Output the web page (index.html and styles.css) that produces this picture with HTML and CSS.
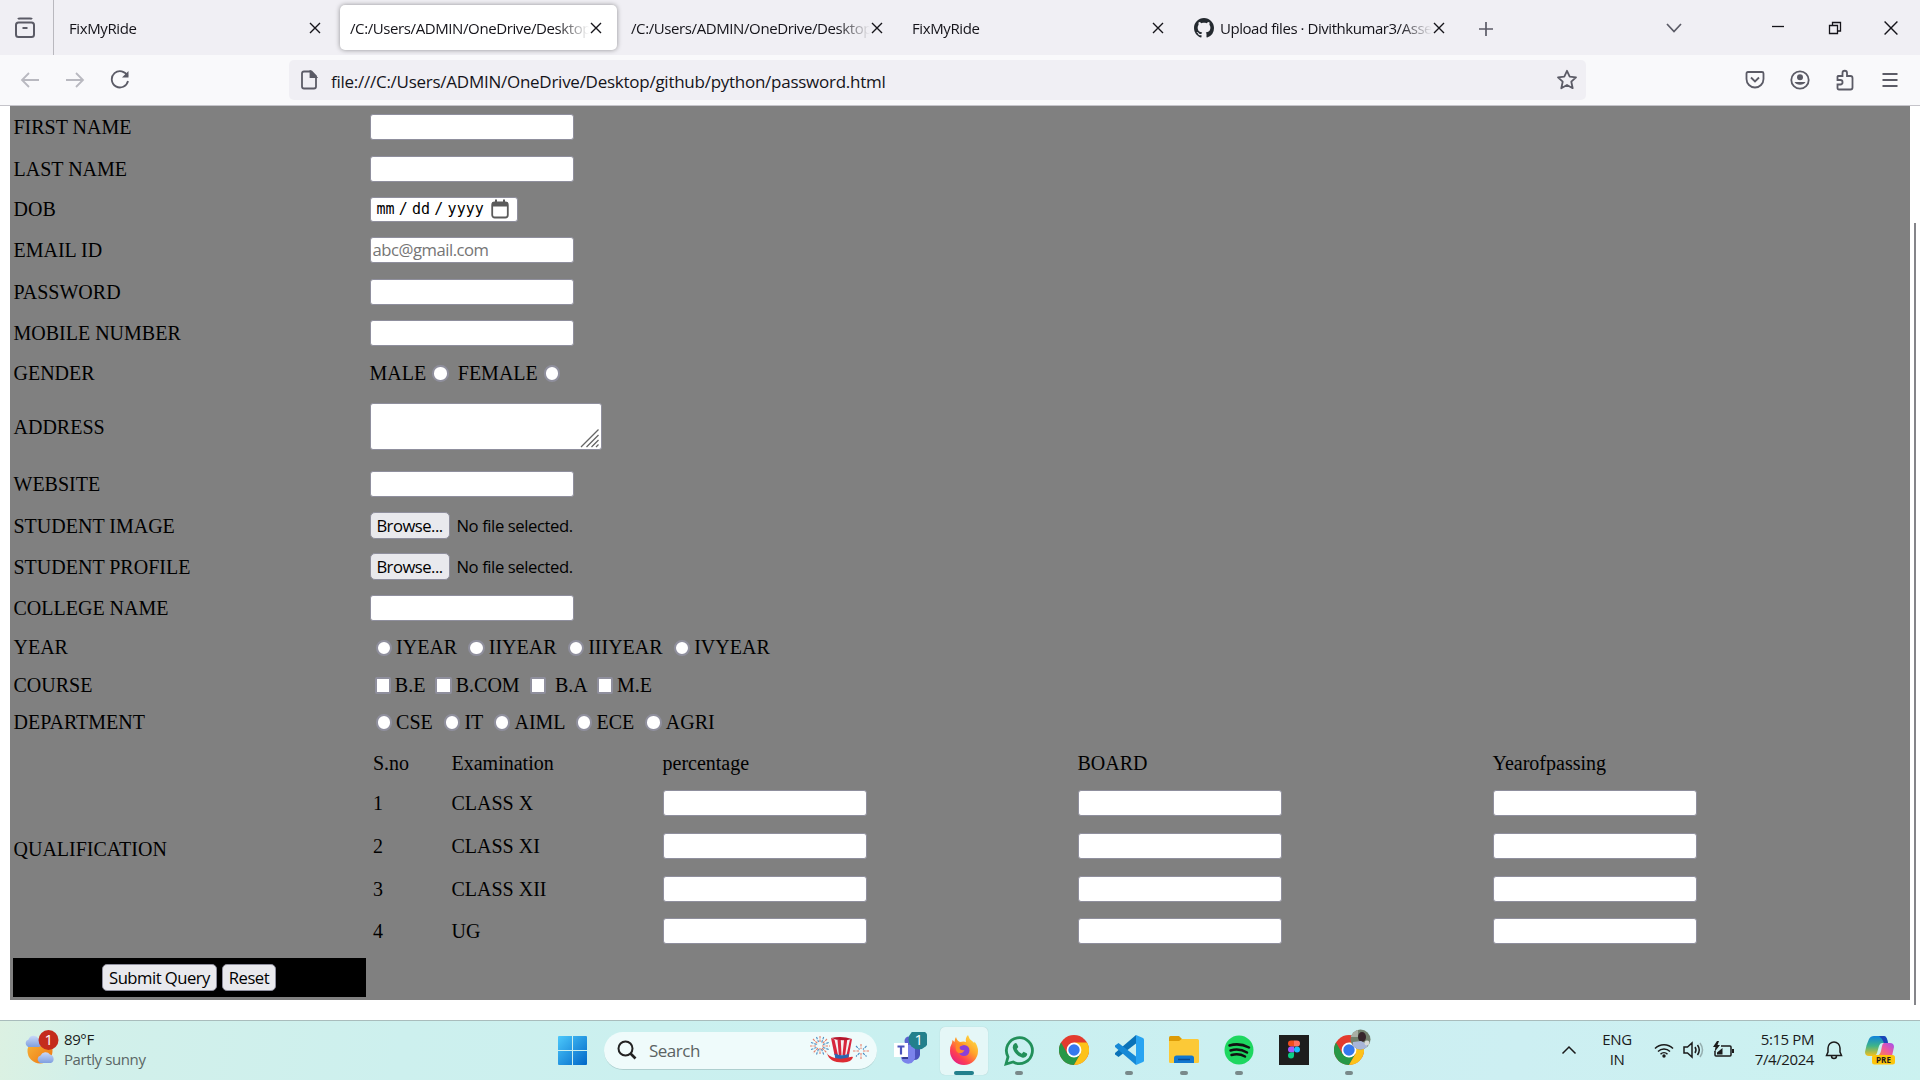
FILE: index.html
```
<!DOCTYPE html>
<html lang="en">
<head>
<meta charset="utf-8">
<title>password.html</title>
<link rel="stylesheet" href="styles.css">
</head>
<body>
<svg class="defs" width="0" height="0" aria-hidden="true">
  <symbol id="x" viewBox="0 0 12 12"><path d="M1 1l10 10M11 1L1 11" fill="none" stroke="#15141a" stroke-width="1.4"/></symbol>
  <symbol id="chrome" viewBox="0 0 30 30">
    <circle cx="15" cy="15" r="15" fill="#e33b2e"/>
    <path d="M2 7.5A15 15 0 0 0 15 30L21.5 18.7 8.5 18.7z" fill="#279847"/>
    <path d="M28 7.5H15L21.5 18.7 15 30A15 15 0 0 0 28 7.5z" fill="#fdc21a"/>
    <circle cx="15" cy="15" r="7.4" fill="#fff"/><circle cx="15" cy="15" r="5.7" fill="#3578ee"/>
  </symbol>
</svg>

<header class="tabstrip">
  <div class="recent">
    <svg width="22" height="22" viewBox="0 0 22 22" fill="none" stroke="#5b5b66" stroke-width="2"><path d="M4 2.2Q4.5 1.5 6 1.5h10q1.5 0 2 .7" /><rect x="2" y="5.5" width="18" height="14.5" rx="2.5"/><path d="M8.5 11h5"/></svg>
  </div>
  <div class="tab"><span class="title">FixMyRide</span><svg class="close"><use href="#x"/></svg></div>
  <div class="tab active"><span class="title">/C:/Users/ADMIN/OneDrive/Desktop</span><svg class="close"><use href="#x"/></svg></div>
  <div class="tab"><span class="title">/C:/Users/ADMIN/OneDrive/Desktop</span><svg class="close"><use href="#x"/></svg></div>
  <div class="tab"><span class="title">FixMyRide</span><svg class="close"><use href="#x"/></svg></div>
  <div class="tab gh">
    <svg class="octo" viewBox="0 0 16 16"><path fill="#24292f" d="M8 0C3.58 0 0 3.58 0 8c0 3.54 2.29 6.53 5.47 7.59.4.07.55-.17.55-.38 0-.19-.01-.82-.01-1.49-2.01.37-2.53-.49-2.69-.94-.09-.23-.48-.94-.82-1.13-.28-.15-.68-.52-.01-.53.63-.01 1.08.58 1.23.82.72 1.21 1.87.87 2.33.66.07-.52.28-.87.51-1.07-1.78-.2-3.64-.89-3.64-3.95 0-.87.31-1.59.82-2.15-.08-.2-.36-1.02.08-2.12 0 0 .67-.21 2.2.82.64-.18 1.32-.27 2-.27s1.36.09 2 .27c1.53-1.04 2.2-.82 2.2-.82.44 1.1.16 1.92.08 2.12.51.56.82 1.27.82 2.15 0 3.07-1.87 3.75-3.65 3.95.29.25.54.73.54 1.48 0 1.07-.01 1.93-.01 2.2 0 .21.15.46.55.38A8.01 8.01 0 0 0 16 8c0-4.42-3.58-8-8-8z"/></svg>
    <span class="title">Upload files · Divithkumar3/Asse</span><svg class="close"><use href="#x"/></svg></div>
  <div class="newtab"><svg width="16" height="16" viewBox="0 0 16 16"><path d="M8 1v14M1 8h14" stroke="#5b5b66" stroke-width="1.7"/></svg></div>
  <div class="winctl">
    <svg width="18" height="12" viewBox="0 0 18 12"><path d="M2 2l7 7.5L16 2" fill="none" stroke="#5b5b66" stroke-width="1.7"/></svg>
    <svg class="min" width="14" height="4"><path d="M1 1.5h12" stroke="#15141a" stroke-width="1.3"/></svg>
    <svg class="restore" width="14" height="14" viewBox="0 0 14 14"><path d="M1.5 4.5h8v8h-8zM4.500 4.500v-3h8v8.500h-3" fill="none" stroke="#15141a" stroke-width="1.3"/></svg>
    <svg class="wclose" width="14" height="14" viewBox="0 0 12 12"><path d="M.5.5l11 11M11.500.5l-11 11" stroke="#15141a" stroke-width="1.2"/></svg>
  </div>
</header>

<nav class="toolbar">
  <div class="navbtns">
    <svg width="20" height="20" viewBox="0 0 20 20" class="dim"><path d="M19 10H2M9 3l-7 7 7 7"/></svg>
    <svg width="20" height="20" viewBox="0 0 20 20" class="dim"><path d="M1 10h17M11 3l7 7-7 7"/></svg>
    <svg width="20" height="20" viewBox="0 0 20 20"><path d="M17.500 6A8.200 8.200 0 1 0 18 11"/><path d="M18.500 1v6.500H12z" fill="#5b5b66" stroke="none"/></svg>
  </div>
  <div class="urlbar">
    <svg width="18" height="20" viewBox="0 0 18 20"><path d="M4 1.500h7.500L16 6v10.500q0 2-2 2H4q-2 0-2-2v-13q0-2 2-2z"/><path d="M10.500 1.500V7H16z" fill="#5b5b66"/></svg>
    <span class="url">file:///C:/Users/ADMIN/OneDrive/Desktop/github/python/password.html</span>
    <svg class="star" width="22" height="22" viewBox="0 0 22 22"><path stroke-linejoin="round" d="M11 1.800l2.700 5.900 6.300.7-4.700 4.300 1.400 6.500L11 16l-5.700 3.200 1.400-6.500L2 8.400l6.300-.7z"/></svg>
  </div>
  <div class="tools">
    <svg width="20" height="20" viewBox="0 0 20 20"><path d="M3 2h14q1.500 0 1.500 1.500V9a8.500 8.500 0 0 1-17 0V3.500Q1.500 2 3 2z"/><path d="M6 7.500l4 4 4-4"/></svg>
    <svg width="20" height="20" viewBox="0 0 20 20"><circle cx="10" cy="10" r="8.700"/><circle cx="10" cy="7.300" r="3" fill="#5b5b66" stroke="none"/><path d="M4.500 12h11a6 4.500 0 0 1-11 0z" fill="#5b5b66" stroke="none"/></svg>
    <svg width="20" height="22" viewBox="0 0 20 22"><path d="M3 7h4.500V4a2 2 0 0 1 4.500 0v3h3.500q2 0 2 2v9.500q0 2-2 2H4q-1.500 0-1.500-1.500v-3.500h2.800a2 2 0 0 0 0-4.500H2.500V7.500z"/></svg>
    <svg width="16" height="16" viewBox="0 0 16 16"><path d="M.5 2h15M.5 8h15M.5 14h15"/></svg>
  </div>
</nav>

<main class="viewport">
  <form class="form">
    <div class="row r1"><label>FIRST NAME</label><input class="text"></div>
    <div class="row r2"><label>LAST NAME</label><input class="text"></div>
    <div class="row r3"><label>DOB</label><span class="text date">mm / dd / yyyy<svg width="18" height="20" viewBox="0 0 18 20"><rect x="1.200" y="3.500" width="15.600" height="15" rx="2.500" fill="none" stroke="#5b5b5b" stroke-width="1.800"/><path d="M1 7.500V5q0-2 2-2h12q2 0 2 2v2.500zM4 .5h2v3H4zM12 .5h2v3h-2z" fill="#5b5b5b"/></svg></span></div>
    <div class="row r4"><label>EMAIL ID</label><input class="text" placeholder="abc@gmail.com"></div>
    <div class="row r5"><label>PASSWORD</label><input class="text"></div>
    <div class="row r6"><label>MOBILE NUMBER</label><input class="text"></div>
    <div class="row r7"><label>GENDER</label><div class="opts">MALE<input type="radio"> FEMALE<input type="radio"></div></div>
    <div class="row r8"><label>ADDRESS</label><div class="area"><svg width="20" height="20" viewBox="0 0 20 20"><path d="M1 19L18.500 1.500M6.500 19l12-12M11.500 19l7-7M16 19l2.500-2.500" stroke="#666" stroke-width="1.300"/></svg></div></div>
    <div class="row r9"><label>WEBSITE</label><input class="text"></div>
    <div class="row r10"><label>STUDENT IMAGE</label><div class="file"><button type="button">Browse...</button><span>No file selected.</span></div></div>
    <div class="row r11"><label>STUDENT PROFILE</label><div class="file"><button type="button">Browse...</button><span>No file selected.</span></div></div>
    <div class="row r12"><label>COLLEGE NAME</label><input class="text"></div>
    <div class="row r13"><label>YEAR</label><div class="opts"><input type="radio">IYEAR <input type="radio">IIYEAR <input type="radio">IIIYEAR <input type="radio">IVYEAR</div></div>
    <div class="row r14"><label>COURSE</label><div class="opts"><input type="checkbox">B.E <input type="checkbox">B.COM <input type="checkbox"> B.A <input type="checkbox">M.E</div></div>
    <div class="row r15"><label>DEPARTMENT</label><div class="opts"><input type="radio">CSE <input type="radio">IT <input type="radio">AIML <input type="radio">ECE <input type="radio">AGRI</div></div>
    <div class="row r16"><label>QUALIFICATION</label>
      <div class="marks">
        <span>S.no</span><span>Examination</span><span>percentage</span><span>BOARD</span><span>Yearofpassing</span>
        <span>1</span><span>CLASS X</span><input class="text"><input class="text"><input class="text">
        <span>2</span><span>CLASS XI</span><input class="text"><input class="text"><input class="text">
        <span>3</span><span>CLASS XII</span><input class="text"><input class="text"><input class="text">
        <span>4</span><span>UG</span><input class="text"><input class="text"><input class="text">
      </div>
    </div>
    <div class="actions"><button type="button">Submit Query</button><button type="button">Reset</button></div>
  </form>
  <div class="scroll"><div class="thumb"></div></div>
</main>

<footer class="taskbar">
  <div class="weather">
    <svg width="36" height="38" viewBox="0 0 36 38">
      <defs><linearGradient id="sun" x1="0" y1="0" x2="1" y2="1"><stop offset="0" stop-color="#f6b83c"/><stop offset="1" stop-color="#ef7410"/></linearGradient>
      <linearGradient id="cl" x1="0" y1="0" x2="0" y2="1"><stop offset="0" stop-color="#c9d8f8"/><stop offset="1" stop-color="#7f9fe0"/></linearGradient></defs>
      <circle cx="16" cy="22" r="12.500" fill="url(#sun)"/>
      <path d="M4 18a4 4 0 0 1 .5-7.500 5.500 5.500 0 0 1 10-1A4.500 4.500 0 0 1 15 18z" fill="url(#cl)"/>
      <path d="M16 34a4 4 0 0 1 .5-7.500 5.500 5.500 0 0 1 9.500-1A4.500 4.500 0 0 1 27 34z" fill="url(#cl)"/>
      <circle cx="24.500" cy="11" r="10" fill="#c42b1c"/>
      <text x="24.500" y="16" text-anchor="middle" class="num">1</text>
    </svg>
    <div class="wtext"><span>89°F</span><span class="sub">Partly sunny</span></div>
  </div>
  <div class="apps">
    <div class="app"><svg width="29" height="29" viewBox="0 0 29 29"><defs><linearGradient id="w" x1="0" y1="0" x2="1" y2="1"><stop offset="0" stop-color="#4cc8fb"/><stop offset="1" stop-color="#0067c8"/></linearGradient></defs><path fill="url(#w)" d="M0 1q0-1 1-1h13v14H0zM15 0h13q1 0 1 1v13H15zM0 15h14v14H1q-1 0-1-1zM15 15h14v13q0 1-1 1H15z"/></svg></div>
    <div class="search">
      <svg width="20" height="20" viewBox="0 0 20 20"><circle cx="8.500" cy="8.500" r="7" fill="none" stroke="#222" stroke-width="2"/><path d="M13.500 13.500l5 5" stroke="#222" stroke-width="2.600"/></svg>
      <span>Search</span>
      <svg class="hat" width="60" height="28" viewBox="0 0 60 28">
        <g fill="none" stroke-width="1.100" stroke-dasharray="2.500 1"><path stroke="#e8806c" d="M10 0v7M10 12v7M0 10h7M12 10h8M3 3l5 5M12 12l5 5M17 3l-5 5M8 12l-5 5"/><path stroke="#4a8fc4" d="M6.500 1l2 5M11.500 13l2.200 5.500M1 13.500l5.500-2M13 8.500l6-2M1 6.500l6 2M13 11.500l6 2M13.700 1l-2 5.500M8.500 13l-2 5.500"/><path stroke="#e8806c" d="M51 8v5M51 17v6M43 15h6M53 15h6"/><path stroke="#4a8fc4" d="M46 10l3.500 3.500M53 17l3.500 3.500M56.500 10L53 13.500M49.500 17L46 20.500"/></g>
        <path d="M21 2q11-2 21 1l-3.500 19H25z" fill="#f4f1f3"/>
        <path d="M21 2l3.500 1.500L28 19h-3.500zM27.500 4h3.300l.7 15h-2.700zM34 4h3.200l-2 15h-2.700zM40 3.500l2-.5-3.500 19-2-3z" fill="#d7263d"/>
        <path d="M21 2q11-2.500 21 1-11 3-21-1z" fill="#b5152c"/>
        <path d="M24.500 17.500q6.500 3 14.500.5l-.7 5q-7 2-13 0z" fill="#2a66b0"/>
        <path d="M17 17q1 3 8 5 7 1.500 13-.5 4-1 5-.5-1 5-10 5.500-14 0-16-9.500z" fill="#dd2c33"/>
      </svg>
    </div>
    <div class="app"><svg width="36" height="36" viewBox="0 0 36 36"><circle cx="18" cy="9" r="4.500" fill="#5b63cf"/><path d="M20 14h9v9a6 6 0 0 1-6 5z" fill="#4b53bc"/><path d="M10 13h14v10a7 7 0 0 1-14 3z" fill="#7b83eb"/><path d="M14 13h3v14h-6z" fill="#343b8f"/><rect x="3" y="11" width="14" height="14" fill="#fff"/><path d="M6.500 14.500h7M10 14.500v8" stroke="#4b53bc" stroke-width="2.200"/><circle cx="27.500" cy="7.500" r="10" fill="#23808c"/><text x="27.500" y="12.500" text-anchor="middle" class="num">1</text></svg></div>
    <div class="app on"><svg width="30" height="30" viewBox="0 0 30 30"><defs><linearGradient id="ff" x1="1" y1="0" x2=".2" y2="1"><stop offset="0" stop-color="#fff04a"/><stop offset=".45" stop-color="#ffa22a"/><stop offset=".75" stop-color="#ff4050"/><stop offset="1" stop-color="#e01a8a"/></linearGradient></defs><path d="M19 0q1 4 4 6 1.500 1 2 2 .5-.5.5-1.500Q29 11 29 16a14 14 0 0 1-28 0q0-5 2-8l.5-3 2 2Q6 3 7 2q1 4 4 5 4-1 6 0-1-4 2-7z" fill="url(#ff)"/><circle cx="15" cy="15.500" r="5.500" fill="#8a3fd8"/><path d="M7 9q5-2 8 1-5 0-4.500 3 1 3 5 2-2 4-6 3-4-2-2.500-9z" fill="#ff8a28"/></svg><i></i></div>
    <div class="app"><svg width="31" height="31" viewBox="0 0 31 31"><path d="M2 29l2-7.200A13 13 0 1 1 9.200 27z" fill="none" stroke="#22905a" stroke-width="2.800"/><path d="M10.500 8.500q1.500-1 2.500.5l1.300 3-1.500 2q1.500 3.200 5 4.700l1.700-2 3.200 1.600q.8.500.3 2-1.500 3-5 2.200Q10.500 20 8.800 13q-.3-3 1.700-4.500z" fill="#22905a"/></svg><i></i></div>
    <div class="app"><svg width="30" height="30"><use href="#chrome"/></svg></div>
    <div class="app"><svg width="30" height="30" viewBox="0 0 30 30"><path d="M22 0v8.500L4.500 22 1 19.500V18z" fill="#0a72b8"/><path d="M22 30v-8.500L4.500 8 1 10.500V12z" fill="#1689d6"/><path d="M22 0l7 3q1 .5 1 1.500v21q0 1-1 1.500l-7 3z" fill="#28a4f2"/></svg><i></i></div>
    <div class="app"><svg width="30" height="28" viewBox="0 0 30 28"><path d="M0 1.500Q0 0 1.500 0H10l3 3-2 5H0z" fill="#dd9b06"/><path d="M0 5h10l3-2h15.500Q30 3 30 4.500V26q0 1-1.500 1h-27Q0 27 0 26z" fill="#fcc937"/><path d="M5 27v-5q0-2.500 2.500-2.500h15Q25 19.500 25 22v5z" fill="#1277cf"/><path d="M9 23.500h12" stroke="#0a4a90" stroke-width="1.500"/></svg><i></i></div>
    <div class="app"><svg width="30" height="30" viewBox="0 0 30 30"><circle cx="15" cy="15" r="14.500" fill="#1ed760"/><path d="M5.500 10.500q10-3 19.500 2M6.500 15.500q9-2.500 16.500 2M7.500 20q7.500-2 13.500 1.500" fill="none" stroke="#111" stroke-width="2.500" stroke-linecap="round"/></svg><i></i></div>
    <div class="app"><svg width="30" height="30" viewBox="0 0 30 30"><path fill="#1e1e1e" d="M0 0h30v30H0z"/><path d="M15 5.500h-3a3 3 0 0 0 0 6h3z" fill="#f24e1e"/><path d="M15 5.500h3a3 3 0 0 1 0 6h-3z" fill="#ff7262"/><path d="M15 11.500h-3a3 3 0 0 0 0 6h3z" fill="#a259ff"/><circle cx="18" cy="14.500" r="3" fill="#1abcfe"/><path d="M15 17.500h-3a3 3 0 1 0 3 3z" fill="#0acf83"/></svg></div>
    <div class="app"><svg width="30" height="30"><use href="#chrome"/></svg><svg class="avatar" width="21" height="21" viewBox="0 0 21 21"><defs><clipPath id="av"><circle cx="10.500" cy="10.500" r="10"/></clipPath></defs><g clip-path="url(#av)"><path fill="#71806c" d="M0 0h21v21H0z"/><path fill="#a9afa5" d="M0 0h8v8H0z"/><ellipse cx="12" cy="8" rx="4" ry="5" fill="#37262b"/><path d="M2 21l1-8 8-1 6 3 1 6z" fill="#a9b6d8"/><circle cx="17" cy="14" r="2.500" fill="#d7dad8"/></g></svg><i></i></div>
  </div>
  <div class="tray">
    <svg class="up" width="16" height="10" viewBox="0 0 16 10"><path d="M1.500 8.500L8 2l6.500 6.500"/></svg>
    <div class="lang"><span>ENG</span><span>IN</span></div>
    <svg class="wifi" width="20" height="16" viewBox="0 0 20 16"><path d="M1 6.500a12.500 12.500 0 0 1 18 0M4 9.500a8.500 8.500 0 0 1 12 0M6.500 12.200a5 5 0 0 1 7 0"/><circle cx="10" cy="14" r="1.700" fill="#1b1b1b" stroke="none"/></svg>
    <svg class="vol" width="21" height="18" viewBox="0 0 21 18"><path d="M1 6h3.500L9 2v14l-4.500-4H1zM12 6q2 3 0 6M14.500 4q3.500 5 0 10"/><path d="M17 2q5 7 0 14" opacity=".3"/></svg>
    <svg class="bat" width="21" height="18" viewBox="0 0 21 18"><path d="M8 5h9q1 0 1 1v8q0 1-1 1H3q-1 0-1-1v-4"/><path d="M19 8h2v4h-2zM4 13.500v-2L9.500 7v6.500zM4 0L0 6h2.500L1.500 11l5.500-7H4.500L6 0z" fill="#1b1b1b" stroke="none"/></svg>
    <div class="clock"><span>5:15 PM</span><span>7/4/2024</span></div>
    <svg class="bell" width="18" height="20" viewBox="0 0 18 20"><path d="M1.500 15.500h15L15 12V8A6 6 0 0 0 3 8v4zM6.500 16a2.500 2.500 0 0 0 5 0"/></svg>
    <svg class="copilot" width="30" height="30" viewBox="0 0 30 30"><defs><linearGradient id="ca" x1="0" y1="0" x2="0" y2="1"><stop offset="0" stop-color="#0e83dc"/><stop offset=".5" stop-color="#3eb489"/><stop offset="1" stop-color="#f6c01c"/></linearGradient><linearGradient id="cb" x1="1" y1="0" x2="0" y2="1"><stop offset="0" stop-color="#a24ff0"/><stop offset=".5" stop-color="#ee5a9d"/><stop offset="1" stop-color="#fb8a3c"/></linearGradient></defs><path d="M9 1h10q2 0 3 3l1 4h-6q-2 0-3 3l-2 7q-1 3-4 3H4q-4 0-4-4 1-7 4-13 1.500-3 5-3z" fill="url(#ca)"/><path d="M14 1h5q2 0 3 3l1 4h-4q-2-5-5-7z" fill="#1b46b8"/><path d="M19 8h6q4 0 4 4l-2 9H12q3-1 4-5l1-5q.5-3 2-3z" fill="url(#cb)"/><rect x="7" y="20" width="23" height="9.500" rx="2.500" fill="#fdc50b"/><text x="18.500" y="28" text-anchor="middle" class="pre">PRE</text></svg>
  </div>
</footer>
</body>
</html>
```
FILE: styles.css
```
* { box-sizing: border-box; }
body {
  margin: 0;
  width: 1920px;
  height: 1080px;
  overflow: hidden;
  display: flex;
  flex-direction: column;
  background: #fff;
  font-family: "Open Sans", "Noto Sans", sans-serif;
  color: #15141a;
}
svg { flex: none; display: block; }
.defs { position: absolute; }

/* Tab strip */
.tabstrip { height: 55px; flex: none; display: flex; align-items: center; background: #f0eff4; }
.recent { width: 54px; height: 55px; padding: 1px 0 0 14px; display: flex; align-items: center; border-right: 1px solid #b9b8be; margin-right: 5px; }
.tab { width: 277px; margin-right: 4px; height: 45px; display: flex; align-items: center; padding: 0 14px 0 10px; border-radius: 5px; }
.tab.active { background: #fff; box-shadow: 0 0 5px rgba(0, 0, 0, .4); }
.title { flex: 1; min-width: 0; overflow: hidden; white-space: nowrap; font-size: 15px; letter-spacing: -.4px; line-height: 24px; padding-top: 1px;
  -webkit-mask-image: linear-gradient(to left, transparent, #000 32px); mask-image: linear-gradient(to left, transparent, #000 32px); }
.gh .title { letter-spacing: -.45px; }
.close { width: 12px; height: 12px; margin: 0 1px 0 1px; }
.octo { width: 20px; height: 20px; margin-right: 6px; }
.tab.gh { padding-left: 11px; }
.newtab { margin-left: 14px; padding-top: 2px; }
.winctl { margin-left: auto; display: flex; align-items: center; padding-right: 22px; }
.min { margin-left: 88px; margin-top: -1px; }
.restore { margin-left: 43px; }
.wclose { margin-left: 42px; }

/* Navigation toolbar */
.toolbar { height: 51px; flex: none; display: flex; align-items: center; background: #f9f9fb; border-bottom: 1px solid #c5c4ca; }
.toolbar svg { fill: none; stroke: #5b5b66; stroke-width: 1.8; }
.toolbar .dim { stroke: #b9b9c0; }
.navbtns { display: flex; gap: 25px; padding-left: 20px; width: 289px; }
.urlbar { width: 1297px; height: 40px; border-radius: 5px; background: #f0eff4; display: flex; align-items: center; padding: 0 8px 0 11px; }
.url { margin-left: 13px; font-size: 17px; letter-spacing: -.26px; padding-top: 2px; white-space: nowrap; }
.star { margin-left: auto; }
.tools { margin-left: auto; padding-right: 22px; display: flex; align-items: center; gap: 25px; }
.tools svg:last-child { margin-left: 2px; }

/* Page */
.viewport { height: 914px; flex: none; display: flex; justify-content: space-between; padding-left: 10px; }
.form { width: 1900px; height: 894px; background: #808080; color: #000; font: 20px "Liberation Serif", "Times New Roman", serif; }
.row { display: grid; grid-template-columns: 356px 1fr; align-items: center; padding-left: 3.5px; line-height: 22px; }
.r1 { height: 42px; } .r2 { height: 41px; } .r3 { height: 40px; } .r4 { height: 41.500px; }
.r5 { height: 42px; } .r6 { height: 41px; } .r7 { height: 38px; } .r8 { height: 70.500px; }
.r9 { height: 44px; } .r10 { height: 39.500px; } .r11 { height: 42px; } .r12 { height: 41px; }
.r13 { height: 37.500px; } .r14 { height: 37px; } .r15 { height: 37px; } .r16 { height: 218px; }
.text { appearance: none; width: 204px; height: 26px; margin: 0; padding: 1px 2px; border: 1px solid #8f8f9d; border-radius: 3px; background: #fff; font: 16.67px "Open Sans", sans-serif; letter-spacing: -.48px; outline: 0; }
.text::placeholder { color: #757575; }
.date { width: 148px; height: 25px; display: flex; align-items: center; justify-content: space-between; padding: 0 8px 1px 6px; font: 15px "DejaVu Sans Mono", monospace; letter-spacing: 0; word-spacing: -4.800px; white-space: nowrap; }
.area { width: 232px; height: 47px; margin-top: -1px; border: 1px solid #8f8f9d; border-radius: 3px; background: #fff; display: flex; align-items: flex-end; justify-content: flex-end; padding: 1px; }
.opts { white-space: nowrap; }
.opts input { appearance: none; width: 16.25px; height: 16.25px; border: 2.5px solid #8f8f9d; background: #fff; vertical-align: -2px; margin: 0 4.100px 0 6.25px; border-radius: 50%; }
.opts input[type="checkbox"] { border-radius: 2px; margin-left: 5px; }
button { font: 16.67px "Open Sans", sans-serif; letter-spacing: -.52px; height: 27px; padding: 0; border: 1px solid #8f8f9d; border-radius: 5px; background: #e9e9ed; color: #000; line-height: 24px; white-space: nowrap; }
.file { display: flex; align-items: center; font: 16.67px "Open Sans", sans-serif; letter-spacing: -.42px; }
.file button { width: 80px; margin-right: 7px; }
.marks { display: grid; grid-template-columns: 78.500px 211px 415px 415px 1fr; grid-template-rows: 41.500px repeat(4, 42.700px); align-items: center; padding-left: 3.5px; height: 217px; align-content: start; }
.marks span:nth-child(-n+5) { padding-top: 4px; }
.actions { width: 353px; height: 39px; margin-left: 3px; background: #000; display: flex; align-items: center; gap: 5px; padding-left: 89px; }
.actions button { line-height: 26px; }
.actions button:first-child { width: 115px; }
.actions button:last-child { width: 54px; }
.scroll { width: 7px; padding: 117px 0 0 1px; }
.thumb { width: 2px; height: 782px; background: #85858a; }

/* Taskbar */
.taskbar { height: 60px; flex: none; display: flex; align-items: center; border-top: 1px solid #a9bcbc; background: linear-gradient(100deg, #dcf1e2 0, #d2f0ea 90px, #cdf0ee 400px, #c9f0f0 900px, #cdeff2 1500px, #cbf2f0 1920px); font-size: 15px; letter-spacing: -.4px; color: #1b1b1b; }
.weather { display: flex; align-items: center; width: 545px; padding-left: 24px; }
.weather svg { margin-top: -5px; }
.wtext { margin: -4px 0 0 4px; display: flex; flex-direction: column; line-height: 20px; }
.sub { color: #5a6665; }
.num { font: 15px "Open Sans", sans-serif; fill: #fff; }
.apps { display: flex; align-items: center; height: 59px; }
.app { width: 55px; height: 48px; display: flex; align-items: center; justify-content: center; position: relative; padding: 0 1px 1px 0; }
.app i { position: absolute; bottom: 0; left: 22.500px; width: 8px; height: 4px; border-radius: 2px; background: #79898a; }
.app.on { width: 48px; margin: 0 4px 0 3px; background: #e5f7f7; border-radius: 5px; box-shadow: 0 0 1px rgba(0, 0, 0, .2); }
.app.on i { left: 14px; width: 20px; background: #23808c; }
.avatar { position: absolute; left: 28px; top: 2px; }
.search { width: 273px; height: 38px; margin: 0 5px 0 4px; border-radius: 19px; background: #effbfb; border-bottom: 1px solid #aecfcf; display: flex; align-items: center; padding: 0 7px 0 13px; font-size: 17px; letter-spacing: -.5px; color: #5b6363; }
.search span { margin-left: 12px; }
.hat { margin-left: auto; }
.tray { margin-left: auto; display: flex; align-items: center; padding-right: 25px; }
.tray svg { fill: none; stroke: #1b1b1b; stroke-width: 1.500; margin-top: -2px; }
.tray .copilot { stroke: none; margin-left: 22px; }
.lang, .clock { display: flex; flex-direction: column; line-height: 20px; margin-top: -4px; }
.lang { text-align: center; width: 30px; margin-left: 25px; }
.wifi { margin-left: 22px; }
.vol { margin-left: 9px; }
.bat { margin-left: 9px; }
.clock { text-align: right; width: 62px; margin-left: 18px; }
.bell { margin-left: 11px; }
.pre { font: bold 8px "Open Sans", sans-serif; fill: #1b1b1b; letter-spacing: 0; }
```
